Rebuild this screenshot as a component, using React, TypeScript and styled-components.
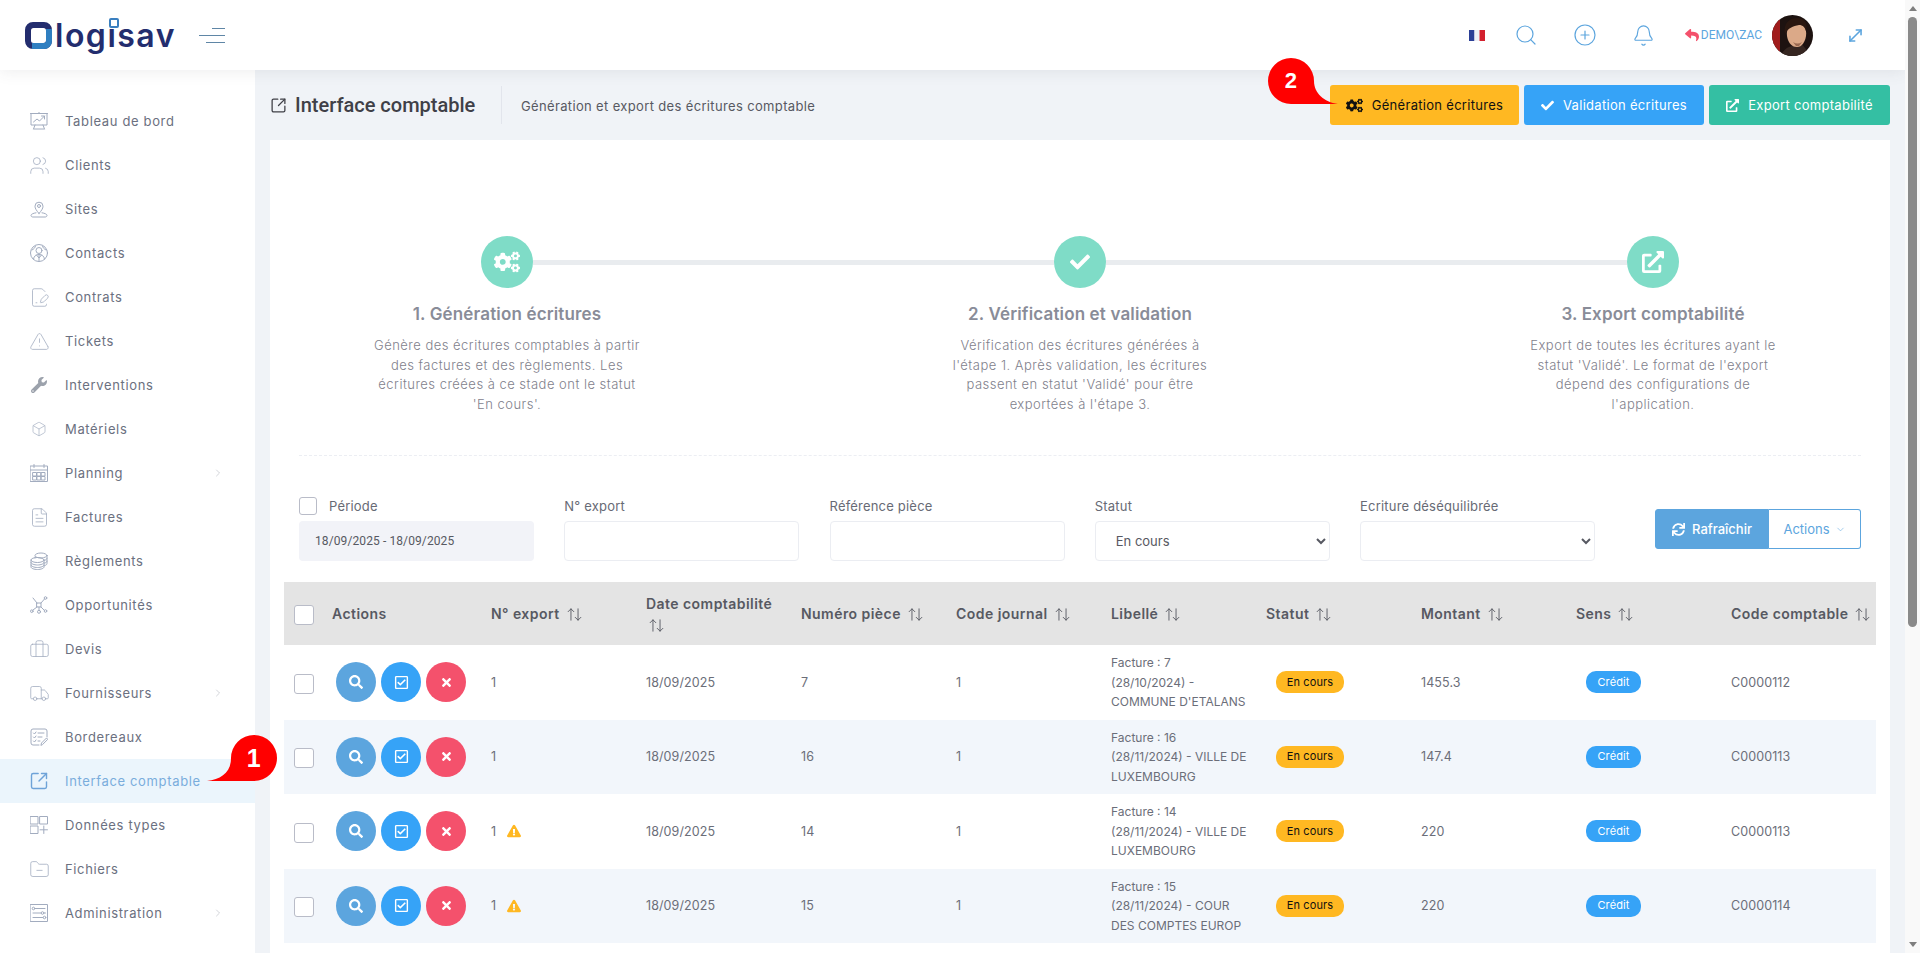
import React from "react";
import styled, { createGlobalStyle } from "styled-components";
import {
  Users, TriangleAlert, Box, Truck, FilePenLine, FileText, Briefcase,
  SquareArrowOutUpRight, Search, CirclePlus, Bell, MoveDiagonal, ChevronRight, ChevronDown,
  ArrowUpDown, FolderMinus,
} from "lucide-react";
import {
  FaWrench, FaCogs, FaCheck, FaExternalLinkAlt, FaSearch, FaRegCheckSquare, FaTimes, FaSync,
  FaExclamationTriangle, FaReply,
} from "react-icons/fa";

const GlobalStyle = createGlobalStyle`
  html, body { margin: 0; padding: 0; height: 100%; overflow: hidden; }
  body { font-family: Inter, "Noto Sans", sans-serif; font-size: 13px; color: #575962; background: #f0f3f7; }
  * { box-sizing: border-box; }
`;

const Page = styled.div`
  display: flex;
  height: 100vh;
  overflow: hidden;
`;

const Main = styled.div`
  flex: 1;
  min-width: 0;
  display: flex;
  flex-direction: column;
`;

const Header = styled.header`
  height: 70px;
  flex: none;
  background: #fff;
  display: flex;
  align-items: center;
  position: relative;
  z-index: 2;
  box-shadow: 0 1px 15px rgba(69, 65, 78, 0.1);
`;

const Brand = styled.div`
  width: 199px;
  padding-left: 25px;
  display: flex;
  align-items: center;
  gap: 3px;
`;

const LogoText = styled.span`
  font-size: 32px;
  font-weight: 600;
  letter-spacing: 1.5px;
  color: #232d6e;
  line-height: 32px;
  margin-top: 1px;
`;

const LogoI = styled.span`
  position: relative;
  &::after {
    content: "";
    position: absolute;
    left: 2px;
    top: 2px;
    width: 6px;
    height: 6px;
    background: #fff;
    border: 2px solid #3a7fc0;
    border-radius: 2px;
  }
`;

const Burger = styled.div`
  width: 26px;
  display: flex;
  flex-direction: column;
  align-items: flex-end;
  gap: 6px;
`;

const BurgerLine = styled.span<{ $w: number }>`
  height: 1px;
  width: ${(p) => p.$w}px;
  background: #5f86a6;
`;

const HeaderTools = styled.div`
  margin-left: auto;
  display: flex;
  align-items: center;
  color: #5ca5de;
  padding-right: 40px;
`;

const ToolSlot = styled.div<{ $w: number }>`
  width: ${(p) => p.$w}px;
  display: flex;
  justify-content: center;
  align-items: center;
`;

const UserTag = styled.div`
  display: flex;
  align-items: center;
  font-family: Roboto, sans-serif;
  font-size: 12px;
  color: #5ca5de;
  margin: 0 10px 0 0;
  svg { color: #f4516c; margin-right: 2px; }
`;

const Avatar = styled.svg`
  width: 41px;
  height: 41px;
  border-radius: 50%;
  margin-right: 33px;
`;

const Body = styled.div`
  flex: 1;
  min-height: 0;
  display: flex;
`;

const Sidebar = styled.nav`
  width: 255px;
  flex: none;
  background: #fff;
  padding-top: 29px;
  position: relative;
  z-index: 1;
`;

const NavItem = styled.div<{ $active?: boolean }>`
  height: 44px;
  display: flex;
  align-items: center;
  padding: 0 31px 0 30px;
  position: relative;
  color: ${(p) => (p.$active ? "#7aaddc" : "#6b7080")};
  background: ${(p) => (p.$active ? "#ebf5fc" : "transparent")};
  letter-spacing: 0.65px;
`;

const NavIcon = styled.span<{ $active?: boolean }>`
  width: 18px;
  height: 18px;
  margin-right: 17px;
  display: flex;
  align-items: center;
  justify-content: center;
  color: ${(p) => (p.$active ? "#6ea3d8" : "#a2acbf")};
  svg { flex: none; }
`;

const NavChevron = styled.span`
  margin-left: auto;
  display: flex;
  color: #a7abb5;
`;

const CalloutBox = styled.div`
  position: absolute;
  z-index: 5;
  width: 70px;
  height: 47px;
`;

const SideCallout = styled(CalloutBox)`
  left: 207px;
  top: -24px;
`;

const TopCallout = styled(CalloutBox)`
  left: -62px;
  top: -27px;
`;

const CalloutNumber = styled.span<{ $size: number; $x: number }>`
  position: absolute;
  top: 0;
  left: ${(p) => p.$x}px;
  width: 46px;
  height: 46px;
  display: flex;
  align-items: center;
  justify-content: center;
  color: #fff;
  font-family: "Liberation Sans", sans-serif;
  font-weight: 700;
  font-size: ${(p) => p.$size}px;
`;

const Content = styled.main`
  flex: 1;
  min-width: 0;
  padding: 0 15px;
  background: #f0f3f7;
`;

const SubHeader = styled.div`
  height: 70px;
  display: flex;
  align-items: center;
`;

const PageTitle = styled.h1`
  margin: 0;
  width: 232px;
  height: 38px;
  display: flex;
  align-items: center;
  gap: 8px;
  font-family: Roboto, sans-serif;
  font-weight: 500;
  font-size: 20px;
  color: #3f4047;
  border-right: 1px solid #e2e5ec;
`;

const PageSub = styled.p`
  margin: 2px 0 0 19px;
  color: #575962;
  letter-spacing: 0.35px;
`;

const TopActions = styled.div`
  margin-left: auto;
  display: flex;
  gap: 5px;
  position: relative;
`;

const TopButton = styled.button<{ $bg: string; $fg: string; $w: number }>`
  position: relative;
  width: ${(p) => p.$w}px;
  height: 40px;
  border: 0;
  border-radius: 3px;
  background: ${(p) => p.$bg};
  color: ${(p) => p.$fg};
  font: inherit;
  letter-spacing: 0.3px;
  display: flex;
  align-items: center;
  justify-content: center;
  gap: 9px;
`;

const Card = styled.section`
  background: #fff;
  padding: 96px 14px 0;
  height: 813px;
  overflow: hidden;
`;

const StepRail = styled.div`
  display: flex;
  align-items: center;
  padding: 0 197px;
`;

const StepCircle = styled.div`
  width: 52px;
  height: 52px;
  border-radius: 50%;
  background: #7fdcc7;
  color: #fff;
  display: flex;
  align-items: center;
  justify-content: center;
  flex: none;
`;

const StepLine = styled.div`
  flex: 1;
  height: 5px;
  background: #e9ecef;
`;

const StepTexts = styled.div`
  display: flex;
  justify-content: space-between;
  padding: 0 88px;
  margin-top: 14px;
`;

const Step = styled.div`
  width: 270px;
  text-align: center;
`;

const StepTitle = styled.h3`
  margin: 0;
  font-size: 17px;
  line-height: 24px;
  font-weight: 600;
  color: #898c98;
  letter-spacing: 0.15px;
`;

const StepText = styled.p`
  margin: 10px 0 0;
  font-size: 13px;
  line-height: 19.5px;
  font-weight: 300;
  color: #7f818c;
  letter-spacing: 0.48px;
`;

const Divider = styled.hr`
  margin: 41px 15px 41px;
  border: 0;
  border-top: 1px dashed #eceef3;
`;

const Filters = styled.div`
  margin: 0 15px;
  display: grid;
  grid-template-columns: repeat(5, 235px) 1fr;
  column-gap: 30.25px;
  align-items: center;
`;

const FilterField = styled.div`
  display: flex;
  flex-direction: column;
`;

const FieldLabel = styled.label`
  height: 24px;
  display: flex;
  align-items: center;
  gap: 12px;
  padding-bottom: 6px;
  letter-spacing: 0.2px;
  color: #676a75;
`;

const CheckBox = styled.input.attrs({ type: "checkbox" })<{ $size: number }>`
  appearance: none;
  margin: 0;
  width: ${(p) => p.$size}px;
  height: ${(p) => p.$size}px;
  background: #fff;
  border: 1px solid #b9bcc8;
  border-radius: 3px;
  flex: none;
`;

const DateBox = styled.div`
  height: 40px;
  background: #f2f3f8;
  border-radius: 4px;
  display: flex;
  align-items: center;
  padding-left: 16px;
  font-family: Roboto, sans-serif;
  font-size: 12px;
  letter-spacing: 0.1px;
  color: #575962;
`;

const TextInput = styled.input`
  height: 40px;
  border: 1px solid #ebedf2;
  border-radius: 4px;
  background: #fff;
`;

const SelectInput = styled.select`
  height: 40px;
  border: 1px solid #ebedf2;
  border-radius: 4px;
  background: #fff;
  padding-left: 16px;
  font: inherit;
  color: #575962;
`;

const FilterActions = styled.div`
  display: flex;
  justify-content: flex-end;
`;

const RefreshButton = styled.button`
  width: 114px;
  height: 40px;
  border: 1px solid #5ca5de;
  border-radius: 3px 0 0 3px;
  background: #5ca5de;
  color: #fff;
  font: inherit;
  font-weight: 500;
  display: flex;
  align-items: center;
  justify-content: center;
  gap: 7px;
`;

const ActionsButton = styled.button`
  width: 92px;
  height: 40px;
  border: 1px solid #5ca5de;
  border-left: 0;
  border-radius: 0 3px 3px 0;
  background: #fff;
  color: #5ca5de;
  font: inherit;
  display: flex;
  align-items: center;
  justify-content: center;
  gap: 5px;
`;

const Table = styled.table`
  margin-top: 21px;
  width: 1592px;
  table-layout: fixed;
  border-collapse: collapse;
`;

const HeadCell = styled.th`
  height: 63px;
  background: #e4e4e4;
  text-align: left;
  font-weight: 600;
  font-size: 14px;
  line-height: 21px;
  letter-spacing: 0.45px;
  color: #575962;
  padding: 0 0 0 10px;
  svg { vertical-align: -4px; margin-left: 2px; }
`;

const Row = styled.tr<{ $alt: boolean }>`
  height: 74.5px;
  background: ${(p) => (p.$alt ? "#f2f6fb" : "#fff")};
`;

const Cell = styled.td`
  padding: 0 10px;
  font-size: 12.5px;
  line-height: 19.5px;
  color: #6b6e79;
  letter-spacing: 0.1px;
`;

const LabelLine = styled.div`
  font-size: 12px;
  letter-spacing: 0;
  white-space: nowrap;
`;

const CheckCell = styled.td`
  padding: 3px 0 0 10px;
  line-height: 0;
`;

const HeadCheckCell = styled(HeadCell)`
  padding: 3px 0 0 10px;
  line-height: 0;
`;

const RowActions = styled.div`
  display: flex;
  gap: 5px;
  padding-left: 4px;
`;

const RoundButton = styled.button<{ $bg: string }>`
  width: 40px;
  height: 40px;
  border: 0;
  padding: 0;
  border-radius: 50%;
  background: ${(p) => p.$bg};
  color: #fff;
  display: flex;
  align-items: center;
  justify-content: center;
`;

const ExportNo = styled.div`
  display: flex;
  align-items: center;
  gap: 11px;
  color: #ffb822;
  span { color: #6b6e79; }
`;

const Badge = styled.span<{ $bg: string; $fg: string; $w: number }>`
  display: flex;
  align-items: center;
  justify-content: center;
  margin-left: 10px;
  width: ${(p) => p.$w}px;
  height: 22px;
  border-radius: 10px;
  background: ${(p) => p.$bg};
  color: ${(p) => p.$fg};
  font-size: 11px;
`;

const ScrollRail = styled.aside`
  width: 15px;
  flex: none;
  background: #f9f9f9;
  display: flex;
  flex-direction: column;
  align-items: center;
  position: relative;
  z-index: 3;
`;

const ScrollArrow = styled.span<{ $up?: boolean }>`
  flex: none;
  margin: ${(p) => (p.$up ? "6px 0 6px" : "auto 0 6px")};
  width: 0;
  height: 0;
  border-left: 4px solid transparent;
  border-right: 4px solid transparent;
  ${(p) => (p.$up ? "border-bottom: 5px solid #7e7e7e;" : "border-top: 5px solid #7e7e7e;")}
`;

const ScrollThumb = styled.span`
  flex: none;
  width: 9px;
  height: 610px;
  border-radius: 5px;
  background: #8a8a8a;
`;

const stroke = { fill: "none", stroke: "currentColor", strokeWidth: 1, strokeLinecap: "round", strokeLinejoin: "round" } as const;

const BoardIcon = () => (
  <svg width="18" height="18" viewBox="0 0 18 18" {...stroke}>
    <path d="M.5 1.500h17M1 1.500v11.500h16V1.500M5 13l-1.500 4M13 13l1.500 4M4 17h10M9 0v1.500" />
    <path d="m3.500 10 3.500-3 2.500 2 5-5M11.500 4h3v3" />
  </svg>
);

const SitesIcon = () => (
  <svg width="18" height="18" viewBox="0 0 18 18" {...stroke}>
    <path d="M9 13.500C6.500 10.500 5 8.600 5 6.200a4 4 0 0 1 8 0c0 2.400-1.500 4.300-4 7.300z" />
    <circle cx="9" cy="6" r="1.500" />
    <path d="M6 12.800c-2.500.4-5 1.200-5 2.700 0 1 1 1.500 2 1.500h12c1 0 2-.5 2-1.500 0-1.500-2.500-2.300-5-2.700" />
  </svg>
);

const ContactsIcon = () => (
  <svg width="18" height="18" viewBox="0 0 18 18" {...stroke}>
    <circle cx="9" cy="9" r="8.500" />
    <circle cx="9" cy="6.500" r="3" />
    <path d="M3.500 15c.5-3 2.500-4.500 5.500-4.500s5 1.500 5.500 4.500M9 10.500V17M6.500 11l2.500 3 2.500-3" />
    <path d="M2 6c2-1 3-2 3.500-4M16 6c-2-1-3-2-3.500-4" />
  </svg>
);

const CalendarIcon = () => (
  <svg width="18" height="18" viewBox="0 0 18 18" {...stroke}>
    <rect x="0.500" y="2" width="17" height="15.500" />
    <path d="M.5 6h17M4 .5v3M14 .5v3" />
    <path d="M3 8.500h3.500V12H3zM7.300 8.500h3.500V12H7.300zM11.500 8.500H15V12h-3.500zM3 12.500h3.500V16H3zM7.300 12.500h3.500V16H7.300zM11.500 12.500H15V16h-3.500z" />
  </svg>
);

const CoinsIcon = () => (
  <svg width="18" height="18" viewBox="0 0 18 18" {...stroke}>
    <ellipse cx="11" cy="3.500" rx="6" ry="2.500" />
    <path d="M17 3.500v8c0 1-1 1.800-2.500 2.200M5 5v1M17 6.200c0 1-1 1.800-2.500 2.200M17 9c0 1-1 1.800-2.500 2.200" />
    <ellipse cx="7.500" cy="8" rx="6.500" ry="2.500" />
    <path d="M1 8v7c0 1.300 3 2.500 6.500 2.500S14 16.300 14 15V8M1 10.500c0 1.300 3 2.500 6.500 2.500s6.500-1.200 6.500-2.500M1 13c0 1.300 3 2.500 6.500 2.500S14 14.300 14 13" />
  </svg>
);

const NetworkIcon = () => (
  <svg width="18" height="18" viewBox="0 0 18 18" {...stroke}>
    <rect x="7" y="7" width="4" height="4" />
    <path d="M7 7 3 2M11 7l3.500-4M7 11l-4 3M11 11l3 3M9 11v3" />
    <circle cx="15.500" cy="2" r="1.300" />
    <circle cx="1.800" cy="15.200" r="1.300" />
    <circle cx="9" cy="15.800" r="1.500" />
    <circle cx="15.500" cy="15" r="1.300" />
  </svg>
);

const ChecklistIcon = () => (
  <svg width="18" height="18" viewBox="0 0 18 18" {...stroke}>
    <path d="M9 17H3a2 2 0 0 1-2-2V3a2 2 0 0 1 2-2h12a2 2 0 0 1 2 2v6" />
    <path d="m3.500 5 1 1 1.500-2M8 5h6M3.500 9l1 1 1.500-2M8 9h4M3.500 13l1 1 1.500-2M8 13h2" />
    <path d="m11 17 .5-2 5-5 1.300 1.300-5 5z" />
  </svg>
);

const GridPlusIcon = () => (
  <svg width="18" height="18" viewBox="0 0 18 18" {...stroke}>
    <rect x="0.500" y="0.500" width="7.500" height="7.500" />
    <rect x="10" y="0.500" width="7.500" height="7.500" />
    <rect x="0.500" y="10" width="7.500" height="7.500" />
    <path d="M10 13.800h7.500M13.800 10v7.500" />
  </svg>
);

const SlidersIcon = () => (
  <svg width="18" height="18" viewBox="0 0 18 18" {...stroke}>
    <rect x="0.500" y="0.500" width="17" height="17" />
    <path d="M5 4.500h10M3 9h8M14 9h1.500M3 13.500h10" />
    <circle cx="3.500" cy="4.500" r="1.300" />
    <circle cx="12.500" cy="9" r="1.300" />
    <circle cx="14.500" cy="13.500" r="1.300" />
  </svg>
);

const thin = { size: 21, strokeWidth: 0.9 };

const navItems: { label: string; icon: React.ReactNode; more?: boolean; active?: boolean }[] = [
  { label: "Tableau de bord", icon: <BoardIcon /> },
  { label: "Clients", icon: <Users {...thin} /> },
  { label: "Sites", icon: <SitesIcon /> },
  { label: "Contacts", icon: <ContactsIcon /> },
  { label: "Contrats", icon: <FilePenLine {...thin} /> },
  { label: "Tickets", icon: <TriangleAlert {...thin} /> },
  { label: "Interventions", icon: <FaWrench size={16} color="#9ca2ac" /> },
  { label: "Matériels", icon: <Box size={16} strokeWidth={1} /> },
  { label: "Planning", icon: <CalendarIcon />, more: true },
  { label: "Factures", icon: <FileText {...thin} /> },
  { label: "Règlements", icon: <CoinsIcon /> },
  { label: "Opportunités", icon: <NetworkIcon /> },
  { label: "Devis", icon: <Briefcase {...thin} /> },
  { label: "Fournisseurs", icon: <Truck {...thin} />, more: true },
  { label: "Bordereaux", icon: <ChecklistIcon /> },
  { label: "Interface comptable", icon: <SquareArrowOutUpRight size={20} strokeWidth={1.7} />, active: true },
  { label: "Données types", icon: <GridPlusIcon /> },
  { label: "Fichiers", icon: <FolderMinus {...thin} /> },
  { label: "Administration", icon: <SlidersIcon />, more: true },
];

const steps = [
  {
    icon: <FaCogs size={26} />,
    title: "1. Génération écritures",
    text: "Génère des écritures comptables à partir des factures et des règlements. Les écritures créées à ce stade ont le statut 'En cours'.",
  },
  {
    icon: <FaCheck size={20} />,
    title: "2. Vérification et validation",
    text: "Vérification des écritures générées à l'étape 1. Après validation, les écritures passent en statut 'Validé' pour être exportées à l'étape 3.",
  },
  {
    icon: <FaExternalLinkAlt size={22} />,
    title: "3. Export comptabilité",
    text: "Export de toutes les écritures ayant le statut 'Validé'. Le format de l'export dépend des configurations de l'application.",
  },
];

const columns = ["N° export", "Date comptabilité", "Numéro pièce", "Code journal", "Libellé", "Statut", "Montant", "Sens", "Code comptable"];

const rows = [
  { warn: false, piece: "7", label: ["Facture : 7", "(28/10/2024) -", "COMMUNE D'ETALANS"], amount: "1455.3", account: "C0000112" },
  { warn: false, piece: "16", label: ["Facture : 16", "(28/11/2024) - VILLE DE", "LUXEMBOURG"], amount: "147.4", account: "C0000113" },
  { warn: true, piece: "14", label: ["Facture : 14", "(28/11/2024) - VILLE DE", "LUXEMBOURG"], amount: "220", account: "C0000113" },
  { warn: true, piece: "15", label: ["Facture : 15", "(28/11/2024) - COUR", "DES COMPTES EUROP"], amount: "220", account: "C0000114" },
];

function Logo() {
  return (
    <Brand>
      <svg width="27" height="27" viewBox="0 0 27 27">
        <path
          fillRule="evenodd"
          fill="#232d6e"
          d="M8 0h11a8 8 0 0 1 8 8v11a8 8 0 0 1-8 8H8a8 8 0 0 1-8-8V8a8 8 0 0 1 8-8zM8.500 6A2.500 2.500 0 0 0 6 8.500v10A2.500 2.500 0 0 0 8.500 21h10a2.500 2.500 0 0 0 2.500-2.500v-10A2.500 2.500 0 0 0 18.500 6z"
        />
        <path fill="#2f7fc1" d="M21 7h6v12a8 8 0 0 1-8 8H7v-6h11.500a2.500 2.500 0 0 0 2.500-2.500z" />
      </svg>
      <LogoText>
        log<LogoI>i</LogoI>sav
      </LogoText>
    </Brand>
  );
}

function Callout({ number }: { number: 1 | 2 }) {
  if (number === 1) {
    return (
      <SideCallout>
        <svg width="70" height="47" viewBox="0 0 70 47">
          <path fill="#f00" d="M47 0a23 23 0 0 1 0 46H0c14-2 24-8 24-23A23 23 0 0 1 47 0z" />
        </svg>
        <CalloutNumber $size={25} $x={24}>1</CalloutNumber>
      </SideCallout>
    );
  }
  return (
    <TopCallout>
      <svg width="70" height="47" viewBox="0 0 70 47">
        <path fill="#f00" d="M23 0a23 23 0 0 1 23 23c0 12 10 21 24 23H23A23 23 0 0 1 23 0z" />
      </svg>
      <CalloutNumber $size={22} $x={0}>2</CalloutNumber>
    </TopCallout>
  );
}

export default function App() {
  return (
    <Page>
      <GlobalStyle />
      <Main>
        <Header>
          <Logo />
          <Burger>
            <BurgerLine $w={13} />
            <BurgerLine $w={26} />
            <BurgerLine $w={19} />
          </Burger>
          <HeaderTools>
            <ToolSlot $w={16}>
              <svg width="16" height="11" viewBox="0 0 16 11">
                <rect width="5.500" height="11" fill="#2b3f96" />
                <rect x="5.500" width="5" height="11" fill="#eef0f6" />
                <rect x="10.500" width="5.500" height="11" fill="#d3202e" />
              </svg>
            </ToolSlot>
            <ToolSlot $w={82}>
              <Search size={24} strokeWidth={1.2} />
            </ToolSlot>
            <ToolSlot $w={36}>
              <CirclePlus size={24} strokeWidth={1.2} />
            </ToolSlot>
            <ToolSlot $w={82}>
              <Bell size={23} strokeWidth={1.2} />
            </ToolSlot>
            <UserTag>
              <FaReply size={14} />
              DEMO\ZAC
            </UserTag>
            <Avatar viewBox="0 0 41 41">
              <rect width="41" height="41" fill="#1d1210" />
              <rect width="8" height="41" fill="#a01c1c" />
              <path d="M9 41c2-6 6-9 11-10l10-2 9 12z" fill="#352621" />
              <path d="M15 21c-1-8 3-12 10-12s10 5 9 12c-1 6-4 11-9 11-6 0-9-5-10-11z" fill="#dba988" />
              <path d="M13 19C11 9 17 3 25 3s11 6 9 13c-1-4-3-6-7-6-6 1-11 3-14 9z" fill="#2a1710" />
              <path d="M21 27c3 2 6 2 9 0l-3 4h-3z" fill="#9a6a52" />
            </Avatar>
            <MoveDiagonal size={19} strokeWidth={2} />
          </HeaderTools>
        </Header>
        <Body>
          <Sidebar>
            {navItems.map((item) => (
              <NavItem key={item.label} $active={item.active}>
                <NavIcon $active={item.active}>{item.icon}</NavIcon>
                {item.label}
                {item.more && (
                  <NavChevron>
                    <ChevronRight size={12} strokeWidth={1} />
                  </NavChevron>
                )}
                {item.active && <Callout number={1} />}
              </NavItem>
            ))}
          </Sidebar>
          <Content>
            <SubHeader>
              <PageTitle>
                <SquareArrowOutUpRight size={17} strokeWidth={1.8} color="#3f4047" />
                Interface comptable
              </PageTitle>
              <PageSub>Génération et export des écritures comptable</PageSub>
              <TopActions>
                <TopButton $bg="#ffb822" $fg="#111" $w={189}>
                  <FaCogs size={17} />
                  Génération écritures
                  <Callout number={2} />
                </TopButton>
                <TopButton $bg="#36a3f7" $fg="#fff" $w={180}>
                  <FaCheck size={13} />
                  Validation écritures
                </TopButton>
                <TopButton $bg="#34bfa3" $fg="#fff" $w={181}>
                  <FaExternalLinkAlt size={13} />
                  Export comptabilité
                </TopButton>
              </TopActions>
            </SubHeader>
            <Card>
              <StepRail>
                <StepCircle>{steps[0].icon}</StepCircle>
                <StepLine />
                <StepCircle>{steps[1].icon}</StepCircle>
                <StepLine />
                <StepCircle>{steps[2].icon}</StepCircle>
              </StepRail>
              <StepTexts>
                {steps.map((step) => (
                  <Step key={step.title}>
                    <StepTitle>{step.title}</StepTitle>
                    <StepText>{step.text}</StepText>
                  </Step>
                ))}
              </StepTexts>
              <Divider />
              <Filters>
                <FilterField>
                  <FieldLabel>
                    <CheckBox $size={18} />
                    Période
                  </FieldLabel>
                  <DateBox>18/09/2025 - 18/09/2025</DateBox>
                </FilterField>
                <FilterField>
                  <FieldLabel>N° export</FieldLabel>
                  <TextInput />
                </FilterField>
                <FilterField>
                  <FieldLabel>Référence pièce</FieldLabel>
                  <TextInput />
                </FilterField>
                <FilterField>
                  <FieldLabel>Statut</FieldLabel>
                  <SelectInput defaultValue="En cours">
                    <option>En cours</option>
                    <option>Validé</option>
                  </SelectInput>
                </FilterField>
                <FilterField>
                  <FieldLabel>Ecriture déséquilibrée</FieldLabel>
                  <SelectInput defaultValue="">
                    <option value=""></option>
                    <option>Oui</option>
                    <option>Non</option>
                  </SelectInput>
                </FilterField>
                <FilterActions>
                  <RefreshButton>
                    <FaSync size={13} />
                    Rafraîchir
                  </RefreshButton>
                  <ActionsButton>
                    Actions
                    <ChevronDown size={11} strokeWidth={1.2} />
                  </ActionsButton>
                </FilterActions>
              </Filters>
              <Table>
                <colgroup>
                  <col width="38" />
                  <col width="159" />
                  {columns.map((c) => (
                    <col key={c} width="155" />
                  ))}
                </colgroup>
                <thead>
                  <tr>
                    <HeadCheckCell>
                      <CheckBox $size={20} />
                    </HeadCheckCell>
                    <HeadCell>Actions</HeadCell>
                    {columns.map((c) => (
                      <HeadCell key={c}>
                        {c} <ArrowUpDown size={17} strokeWidth={1.3} />
                      </HeadCell>
                    ))}
                  </tr>
                </thead>
                <tbody>
                  {rows.map((row, i) => (
                    <Row key={row.piece} $alt={i % 2 === 1}>
                      <CheckCell>
                        <CheckBox $size={20} />
                      </CheckCell>
                      <Cell>
                        <RowActions>
                          <RoundButton $bg="#5ca5de">
                            <FaSearch size={14} />
                          </RoundButton>
                          <RoundButton $bg="#36a3f7">
                            <FaRegCheckSquare size={15} />
                          </RoundButton>
                          <RoundButton $bg="#f4516c">
                            <FaTimes size={13} />
                          </RoundButton>
                        </RowActions>
                      </Cell>
                      <Cell>
                        <ExportNo>
                          <span>1</span>
                          {row.warn && <FaExclamationTriangle size={14} />}
                        </ExportNo>
                      </Cell>
                      <Cell>18/09/2025</Cell>
                      <Cell>{row.piece}</Cell>
                      <Cell>1</Cell>
                      <Cell>
                        {row.label.map((line) => (
                          <LabelLine key={line}>{line}</LabelLine>
                        ))}
                      </Cell>
                      <Cell>
                        <Badge $bg="#ffb822" $fg="#111" $w={68}>En cours</Badge>
                      </Cell>
                      <Cell>{row.amount}</Cell>
                      <Cell>
                        <Badge $bg="#36a3f7" $fg="#fff" $w={55}>Crédit</Badge>
                      </Cell>
                      <Cell>{row.account}</Cell>
                    </Row>
                  ))}
                </tbody>
              </Table>
            </Card>
          </Content>
        </Body>
      </Main>
      <ScrollRail>
        <ScrollArrow $up />
        <ScrollThumb />
        <ScrollArrow />
      </ScrollRail>
    </Page>
  );
}
